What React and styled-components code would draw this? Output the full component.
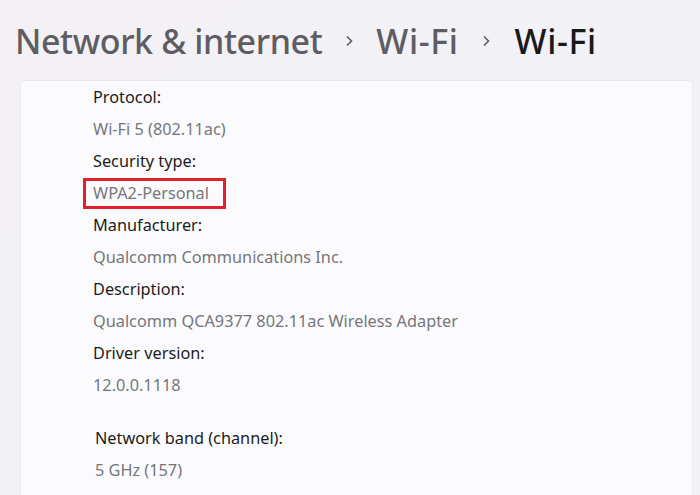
import React from 'react';
import styled, { createGlobalStyle } from 'styled-components';

const GlobalStyle = createGlobalStyle`
  html, body {
    margin: 0;
    padding: 0;
    background: #f3f2f7;
    font-family: "Noto Sans", "Open Sans", sans-serif;
    overflow: hidden;
  }
`;

const Page = styled.div`
  width: 700px;
  height: 495px;
  overflow: hidden;
  background: linear-gradient(135deg, #f4f1f5 0%, #f2f2f7 60%, #f3f2f8 100%);
`;

const Breadcrumb = styled.h1`
  display: flex;
  align-items: center;
  margin: 0;
  padding: 19px 0 0 15px;
  height: 62px;
  box-sizing: border-box;
  font-size: 34px;
  font-weight: 500;
  letter-spacing: -0.4px;
  color: #5e5e62;
`;

const Crumb = styled.span`
  color: ${(p) => (p.$current ? '#1a1a1a' : '#5e5e62')};
  letter-spacing: ${(p) => (p.$wide ? '0.6px' : 'inherit')};
`;

const Chevron = styled.span`
  display: inline-flex;
  margin: 0 ${(p) => (p.$last ? '24px' : '22px')} 0 22px;
  color: #5e5e62;
`;

const Card = styled.section`
  margin: 18px 7px 0 20px;
  height: 500px;
  background: #fbfbfd;
  border: 1px solid #ebe9ef;
  border-radius: 4px 4px 0 0;
  padding: 0 0 0 72px;
  box-sizing: border-box;
`;

const Field = styled.div`
  display: flex;
  flex-direction: column;
  padding-left: ${(p) => (p.$shift ? '2px' : '0')};
  margin-top: ${(p) => (p.$gap ? '21px' : '0')};
`;

const Label = styled.div`
  height: 32px;
  line-height: 32px;
  font-size: 16.3px;
  color: #1b1b1b;
`;

const Value = styled.div`
  height: 32px;
  line-height: 32px;
  font-size: 16.3px;
  color: #76767a;
`;

const Highlight = styled.span`
  display: inline-block;
  margin-left: -10px;
  padding: 0 14px 0 7px;
  height: 25px;
  line-height: 25px;
  border: 3px solid #e0202b;
`;

const ChevronIcon = () => (
  <svg width="10" height="14" viewBox="0 0 10 14">
    <path d="M3 2.5 L7.5 7 L3 11.5" fill="none" stroke="#5e5e62" strokeWidth="1.6" />
  </svg>
);

const fields = [
  { label: 'Protocol:', value: 'Wi-Fi 5 (802.11ac)' },
  { label: 'Security type:', value: 'WPA2-Personal', marked: true },
  { label: 'Manufacturer:', value: 'Qualcomm Communications Inc.' },
  { label: 'Description:', value: 'Qualcomm QCA9377 802.11ac Wireless Adapter' },
  { label: 'Driver version:', value: '12.0.0.1118' },
  { label: 'Network band (channel):', value: '5 GHz (157)', gap: true, shift: true },
];

export default function App() {
  return (
    <Page>
      <GlobalStyle />
      <Breadcrumb>
        <Crumb>Network &amp; internet</Crumb>
        <Chevron><ChevronIcon /></Chevron>
        <Crumb $wide>Wi-Fi</Crumb>
        <Chevron $last><ChevronIcon /></Chevron>
        <Crumb $current $wide>Wi-Fi</Crumb>
      </Breadcrumb>
      <Card>
        {fields.map((f) => (
          <Field key={f.label} $gap={f.gap} $shift={f.shift}>
            <Label>{f.label}</Label>
            <Value>{f.marked ? <Highlight>{f.value}</Highlight> : f.value}</Value>
          </Field>
        ))}
      </Card>
    </Page>
  );
}
